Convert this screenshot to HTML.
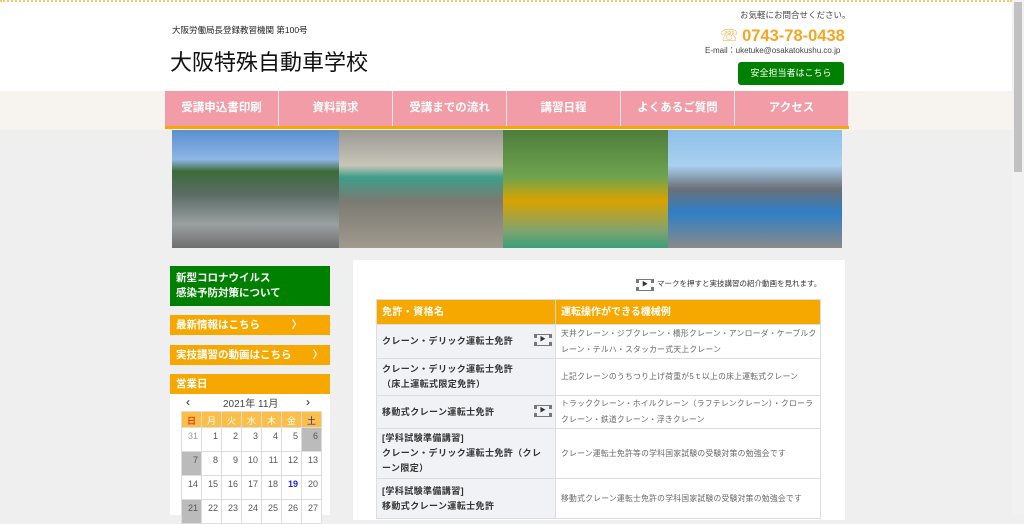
<!DOCTYPE html>
<html><head><meta charset="utf-8"><style>
*{margin:0;padding:0;box-sizing:border-box}
body{width:1024px;height:515px;overflow:hidden;background:#efefef;font-family:"Liberation Sans","Noto Sans CJK JP",sans-serif;position:relative}
.top{position:absolute;left:0;top:0;width:1012px;height:91px;background:#fff;border-top:2px dotted #f5c96a}
.band{position:absolute;left:0;top:91px;width:1012px;height:39px;background:#f7f3ef}
.sb{position:absolute;right:0;top:0;width:12px;height:515px;background:#f1f1f1}
.sb div{position:absolute;left:2px;top:2px;width:8px;height:170px;background:#c1c1c1}
.abs{position:absolute}
nav{position:absolute;left:165px;top:91px;width:684px;height:38px;display:flex;border-bottom:3px solid #f5a800}
nav div{flex:1;background:#f19ca6;color:#fff;font-size:11.5px;font-weight:bold;text-align:center;line-height:35px;border-right:1px solid #fbe6e8}
.ph{position:absolute;top:130px;height:118px;width:168px}
.side{position:absolute;left:170px;width:160px;color:#fff;font-size:10.5px;font-weight:bold;padding-left:6px}
table.cal{position:absolute;left:181px;top:411px;border-collapse:collapse;font-size:9px;color:#555}
.cal td{width:20px;height:24px;border:1px solid #ddd;text-align:right;vertical-align:top;padding:3px 3px 0 0;background:#fff}
.cal tr.h td{background:#fbbf47;height:15px;text-align:center;padding:2px 0 0;color:#fff}
.cal td.g{background:#bbb}
.main{position:absolute;left:353px;top:260px;width:492px;height:260px;background:#fff}
table.t{position:absolute;left:376px;top:299px;border-collapse:collapse;width:445px;font-size:9px;table-layout:fixed}
.t td{border:1px solid #ddd;vertical-align:middle;padding:0 5px}
.t td.a{width:179px;background:#f0f2f6;color:#333;font-weight:bold;font-size:9px;line-height:15px;letter-spacing:.4px}
.t td.b{color:#666;font-size:7.8px;line-height:16px;letter-spacing:.25px;padding:0 3px 0 5px}
.t tr.hd td{background:#f7a800;color:#fff;font-weight:bold;height:25px;font-size:10px;line-height:15px}
.pl{float:right;width:18px;height:12px;border:1px solid #777;border-left:3px dotted #777;border-right:3px dotted #777;font-size:6px;text-align:center;line-height:10px;margin-right:-2px}
</style></head><body>
<div class="top"></div><div class="band"></div>
<div class="sb"><div></div></div>
<div class="abs" style="left:172px;top:24px;font-size:8.5px;color:#222">大阪労働局長登録教習機関 第100号</div>
<div class="abs" style="left:170px;top:45px;font-size:22px;color:#111">大阪特殊自動車学校</div>
<div class="abs" style="left:740px;top:9px;font-size:8.5px;color:#444">お気軽にお問合せください。</div>
<div class="abs" style="left:721px;top:22px;font-size:16.5px;color:#f5a623;font-weight:bold">☏ 0743-78-0438</div>
<div class="abs" style="left:705px;top:45px;font-size:8px;color:#444">E-mail：uketuke@osakatokushu.co.jp</div>
<div class="abs" style="left:738px;top:62px;width:106px;height:23px;background:#008000;border-radius:3px;color:#fff;font-size:9px;text-align:center;line-height:23px">安全担当者はこちら</div>
<nav><div>受講申込書印刷</div><div>資料請求</div><div>受講までの流れ</div><div>講習日程</div><div>よくあるご質問</div><div>アクセス</div></nav>
<div class="ph" style="left:172px;background:linear-gradient(#5b8fd0 0,#8fb6e6 25%,#3d6b3a 35%,#5c6c66 55%,#9aa0a2 80%,#6e6e6e)"></div>
<div class="ph" style="left:339px;background:linear-gradient(#9a9a95,#c8c4b8 30%,#3e9e8a 40%,#7b7a72 60%,#a09a8e 100%)"></div>
<div class="ph" style="left:503px;background:linear-gradient(#4e7d3c,#6fa34e 40%,#d9a300 60%,#82a36e 85%,#3aa07a)"></div>
<div class="ph" style="left:668px;width:174px;background:linear-gradient(#8ec0ea,#a9d0f0 30%,#6a7078 50%,#2f7fc6 70%,#8a8a8a)"></div>
<div class="side" style="top:266px;height:40px;background:#008000;padding-top:5px;line-height:15px">新型コロナウイルス<br>感染予防対策について</div>
<div class="side" style="top:315px;height:20px;background:#f7a800;line-height:20px">最新情報はこちら　　　〉</div>
<div class="side" style="top:345px;height:20px;background:#f7a800;line-height:20px">実技講習の動画はこちら　　〉</div>
<div class="side" style="top:374px;height:20px;background:#f7a800;line-height:20px">営業日</div>
<div class="abs" style="left:170px;top:394px;width:160px;height:121px;background:#fff"></div>
<div class="abs" style="left:186px;top:395px;font-size:12px;color:#222">‹</div>
<div class="abs" style="left:223px;top:395px;font-size:10px;color:#444">2021年 11月</div>
<div class="abs" style="left:306px;top:395px;font-size:12px;color:#222">›</div>
<table class="cal">
<tr class="h"><td style="color:#d00">日</td><td>月</td><td>火</td><td>水</td><td>木</td><td>金</td><td style="color:#22a">土</td></tr>
<tr><td style="color:#999">31</td><td>1</td><td>2</td><td>3</td><td>4</td><td>5</td><td class="g">6</td></tr>
<tr><td class="g">7</td><td>8</td><td>9</td><td>10</td><td>11</td><td>12</td><td>13</td></tr>
<tr><td>14</td><td>15</td><td>16</td><td>17</td><td>18</td><td style="color:#22c;font-weight:bold">19</td><td>20</td></tr>
<tr><td class="g">21</td><td>22</td><td>23</td><td>24</td><td>25</td><td>26</td><td>27</td></tr>
</table>
<div class="main"></div>
<div class="abs" style="left:636px;top:278px;font-size:7.5px;color:#333"><span class="pl" style="float:none;display:inline-block;margin-right:3px">▶</span>マークを押すと実技講習の紹介動画を見れます。</div>
<table class="t">
<tr class="hd"><td class="a" style="background:#f7a800;color:#fff">免許・資格名</td><td>運転操作ができる機械例</td></tr>
<tr style="height:34px"><td class="a">クレーン・デリック運転士免許<span class="pl">▶</span></td><td class="b">天井クレーン・ジブクレーン・橋形クレーン・アンローダ・ケーブルクレーン・テルハ・スタッカー式天上クレーン</td></tr>
<tr style="height:37px"><td class="a">クレーン・デリック運転士免許<br>（床上運転式限定免許）</td><td class="b">上記クレーンのうちつり上げ荷重が5ｔ以上の床上運転式クレーン</td></tr>
<tr style="height:33px"><td class="a">移動式クレーン運転士免許<span class="pl">▶</span></td><td class="b">トラッククレーン・ホイルクレーン（ラフテレンクレーン）・クローラクレーン・鉄道クレーン・浮きクレーン</td></tr>
<tr style="height:50px"><td class="a">[学科試験準備講習]<br>クレーン・デリック運転士免許（クレーン限定）</td><td class="b">クレーン運転士免許等の学科国家試験の受験対策の勉強会です</td></tr>
<tr style="height:40px"><td class="a">[学科試験準備講習]<br>移動式クレーン運転士免許</td><td class="b">移動式クレーン運転士免許の学科国家試験の受験対策の勉強会です</td></tr>
</table>
</body></html>
